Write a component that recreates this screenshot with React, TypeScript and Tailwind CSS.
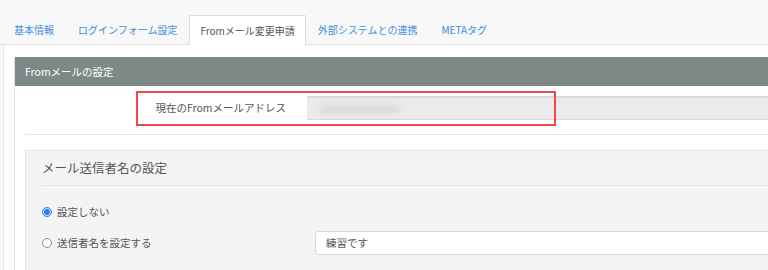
const tabs = ["基本情報", "ログインフォーム設定", "Fromメール変更申請", "外部システムとの連携", "METAタグ"];

function Radio({ checked }: { checked?: boolean }) {
  return checked ? (
    <span className="flex h-[10px] w-[10px] items-center justify-center rounded-full border border-[#2f80ed] bg-[#cfe2fb]">
      <span className="h-[6px] w-[6px] rounded-full bg-[#2f80ed]" />
    </span>
  ) : (
    <span className="h-[10px] w-[10px] rounded-full border border-[#8a8a8a] bg-white" />
  );
}

export default function App() {
  return (
    <div className="relative h-[270px] w-[768px] overflow-hidden bg-[#f8f8f8] font-['Noto_Sans_CJK_JP',sans-serif] text-[10.5px] text-[#444]">
      {/* tabs */}
      <div className="flex h-[45px] items-end border-b border-[#dedede] pl-[2px] text-[10px]">
        {tabs.map((t, i) =>
          i === 2 ? (
            <div key={t} className="-mb-px flex h-[30px] items-center rounded-t-[2px] border border-b-0 border-[#dcdcdc] bg-white px-[10px] text-[#555]">
              {t}
            </div>
          ) : (
            <div key={t} className="flex h-[29px] items-center px-[12px] text-[#3f8ee3]">
              {t}
            </div>
          )
        )}
      </div>

      {/* content */}
      <div className="ml-[3px] h-full w-[840px] border-l border-[#e6e6e6] bg-white pl-[10px] pt-[12px]">
        <div className="border-l border-[#e3e3e3]">
          <div className="flex h-[29px] items-center bg-[#7d8987] pl-[10px] text-white">Fromメールの設定</div>
          <div className="px-[10px]">
            <div className="flex items-center border-b border-[#e6e6e6] pb-[14px] pt-[10px]">
              <div className="w-[282px] pr-[21px] text-right text-[#555]">現在のFromメールアドレス</div>
              <div className="flex h-[24px] flex-1 items-center border-t-2 border-b border-[#d8d8d8] bg-[#ebebeb] pl-[12px]">
                <span className="h-[8px] w-[80px] rounded-full bg-[#dadada] blur-[3px]" />
              </div>
            </div>

            <div className="mt-[15px] border border-[#e6e6e6] bg-[#f4f4f4] px-[16px]">
              <div className="flex h-[35px] items-center border-b border-[#e2e2e2] text-[12.5px] text-[#555]">
                メール送信者名の設定
              </div>
              <div className="flex h-[36px] items-center gap-[5px] pt-[15px] text-[#555]">
                <Radio checked />
                <span>設定しない</span>
              </div>
              <div className="flex items-center pt-[9px] text-[#555]">
                <div className="flex w-[273px] items-center gap-[5px]">
                  <Radio />
                  <span>送信者名を設定する</span>
                </div>
                <div className="flex h-[24px] flex-1 items-center rounded-[3px] border border-[#d9d9d9] bg-white pl-[10px] text-[#555]">
                  練習です
                </div>
              </div>
              <div className="h-[20px]" />
            </div>
          </div>
        </div>
      </div>

      {/* annotation */}
      <div className="absolute left-[136px] top-[91px] h-[35px] w-[420px] border-2 border-[#f04848]" />
    </div>
  );
}
